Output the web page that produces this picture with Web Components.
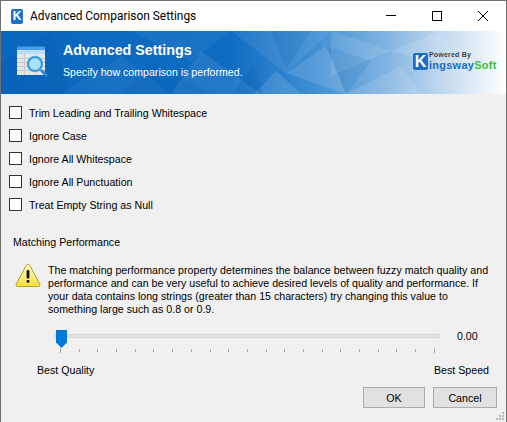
<!DOCTYPE html>
<html>
<head>
<meta charset="utf-8">
<style>
html, body { margin: 0; padding: 0; background: #f0f0f0; }
body { font: 10.65px "Liberation Sans", Arial, sans-serif; color: #000; }
</style>
</head>
<body>
<win-dialog>
	<win-titlebar slot="title">Advanced Comparison Settings</win-titlebar>
	<win-banner slot="banner" heading="Advanced Settings" sub="Specify how comparison is performed."></win-banner>
	<win-check>Trim Leading and Trailing Whitespace</win-check>
	<win-check>Ignore Case</win-check>
	<win-check>Ignore All Whitespace</win-check>
	<win-check>Ignore All Punctuation</win-check>
	<win-check>Treat Empty String as Null</win-check>
	<win-perf slot="perf"></win-perf>
	<win-button slot="buttons" style="width:60px">OK</win-button>
	<win-button slot="buttons" style="width:62px">Cancel</win-button>
</win-dialog>

<script>
function define(name, html) {
	customElements.define(name, class extends HTMLElement {
		constructor() {
			super();
			this.attachShadow({ mode: "open" }).innerHTML = typeof html === "function" ? html(this) : html;
		}
	});
}

define("win-dialog", `
	<style>
		:host { display: flex; flex-direction: column; width: 507px; height: 422px; box-sizing: border-box;
			border: 1px solid #707070; border-bottom: 0; background: #f0f0f0; position: relative; }
		.checks { display: flex; flex-direction: column; gap: 10px; padding: 12px 0 0 8px; }
		.buttons { display: flex; justify-content: flex-end; gap: 8px; padding: 0 9px 0 0; }
		.grip { position: absolute; right: 1px; bottom: 1px; width: 10px; height: 10px; }
	</style>
	<slot name="title"></slot>
	<slot name="banner"></slot>
	<div class="checks"><slot></slot></div>
	<slot name="perf"></slot>
	<div class="buttons"><slot name="buttons"></slot></div>
	<svg class="grip" viewBox="0 0 10 10" fill="#b8b8b8">
		<rect x="7" y="1" width="2" height="2"/>
		<rect x="4" y="4" width="2" height="2"/><rect x="7" y="4" width="2" height="2"/>
		<rect x="1" y="7" width="2" height="2"/><rect x="4" y="7" width="2" height="2"/><rect x="7" y="7" width="2" height="2"/>
	</svg>
`);

define("win-titlebar", `
	<style>
		:host { display: flex; align-items: center; height: 30px; background: #fff; flex: none; }
		.logo { width: 12px; height: 15px; margin: 0 7px 0 10px; background: #1a73c9; border-radius: 2px; color: #fff;
			font: bold 12px/15px "Liberation Sans", sans-serif; text-align: center; }
		.text { flex: 1; font: 11.9px Roboto, "Noto Sans", sans-serif; color: #000; }
		.btn { width: 46px; height: 30px; display: flex; align-items: center; justify-content: center; }
		svg { width: 10px; height: 10px; stroke: #000; stroke-width: 1; fill: none; shape-rendering: crispEdges; }
		.x { shape-rendering: auto; }
	</style>
	<div class="logo">K</div>
	<div class="text"><slot></slot></div>
	<div class="btn"><svg viewBox="0 0 10 10"><path d="M0 4.5H10"/></svg></div>
	<div class="btn"><svg viewBox="0 0 10 10"><rect x=".5" y=".5" width="9" height="9"/></svg></div>
	<div class="btn"><svg class="x" viewBox="0 0 10 10"><path d="M0 0L10 10M10 0L0 10"/></svg></div>
`);

define("win-banner", el => `
	<style>
		:host { display: flex; align-items: flex-start; height: 63px; flex: none; position: relative; overflow: hidden;
			background: linear-gradient(90deg, #0b67bd 0%, #0e6cc2 45%, #3f8fd3 62%, #7fb3e0 76%, #c5dbf0 88%, #fff 100%); color: #fff; }
		.bg { position: absolute; inset: 0; width: 100%; height: 100%; }
		.icon { position: relative; width: 33px; height: 31px; margin: 15px 0 0 15px; flex: none; }
		.txt { position: relative; margin: 8px 0 0 14px; flex: 1; }
		h1 { margin: 0; font: bold 14.3px/22px "Liberation Sans", sans-serif; }
		p { margin: 4px 0 0; font: 10.6px/14px "Liberation Sans", sans-serif; }
		.brand { position: relative; display: flex; width: 87px; margin: 20px 6px 0 0; }
		.k { width: 15px; height: 17px; margin-top: 2px; background: #1a6fc4; border-radius: 2px; color: #fff; flex: none;
			font: bold 16px/17px "Liberation Sans", sans-serif; text-align: center; }
		.brand-r { display: flex; flex-direction: column; margin-left: 1px; }
		.pw { font: bold 7px/8px "Liberation Sans", sans-serif; letter-spacing: .2px; color: #444; }
		.nm { font: bold 11px/13px "Liberation Sans", sans-serif; letter-spacing: .25px; color: #1a6fc4; white-space: nowrap; }
		.nm b { color: #3cc03c; }
	</style>
	<svg class="bg" viewBox="0 0 505 63" preserveAspectRatio="none">
		<g fill="#fff">
			<polygon points="60,63 120,25 170,63" opacity=".05"/>
			<polygon points="130,0 190,30 230,0" opacity=".05"/>
			<polygon points="170,63 200,20 260,63" opacity=".09"/>
			<polygon points="230,0 285,42 330,0" opacity=".07"/>
			<polygon points="253,63 275,40 300,63" opacity=".12"/>
			<polygon points="285,42 325,15 345,63" opacity=".12"/>
			<polygon points="330,0 330,45 390,20" opacity=".1"/>
			<polygon points="345,63 400,35 420,63" opacity=".12"/>
			<polygon points="390,20 440,0 460,40" opacity=".12"/>
		</g>
		<g fill="#024a96">
			<polygon points="0,30 50,0 70,63 0,63" opacity=".12"/>
			<polygon points="150,30 210,63 120,63" opacity=".1"/>
			<polygon points="270,0 285,38 310,0" opacity=".12"/>
			<polygon points="325,15 370,30 345,63" opacity=".1"/>
			<polygon points="253,35 262,63 230,63" opacity=".15"/>
		</g>
	</svg>
	<svg class="icon" viewBox="0 0 33 31">
		<path d="M1 1.5a1 1 0 0 1 1-1h26a1 1 0 0 1 1 1V4H1z" fill="#4a9ee6"/>
		<rect x="1" y="4" width="28" height="4" fill="#b9dcf8"/>
		<rect x="1" y="8" width="28" height="21" fill="#e6e6e6"/>
		<path d="M1 12.5H29M1 16.5H29M1 20.5H29M1 24.5H29M8.5 8V29M19.5 8V29" stroke="#c9c9c9" fill="none"/>
		<path d="M25 24L31 30" stroke="#2f86d8" stroke-width="3"/>
		<circle cx="19" cy="18" r="7" fill="#a8e2f8" stroke="#2f9be8" stroke-width="2.2"/>
	</svg>
	<div class="txt">
		<h1>${el.getAttribute("heading")}</h1>
		<p>${el.getAttribute("sub")}</p>
	</div>
	<div class="brand">
		<div class="k">K</div>
		<div class="brand-r">
			<div class="pw">Powered By</div>
			<div class="nm">ingsway<b>Soft</b></div>
		</div>
	</div>
`);

define("win-check", `
	<style>
		:host { display: flex; align-items: center; gap: 7px; height: 13px; }
		.box { width: 11px; height: 11px; border: 1px solid #333; background: #fff; flex: none; }
	</style>
	<div class="box"></div>
	<slot></slot>
`);

define("win-perf", `
	<style>
		:host { display: flex; flex-direction: column; height: 176px; flex: none; }
		.head { padding: 24px 0 0 12px; line-height: 14px; }
		.note { display: flex; padding: 15px 0 0 14px; }
		.note svg { width: 26px; height: 24px; flex: none; margin-top: -1px; }
		.note p { margin: 0 0 0 7px; line-height: 13px; white-space: nowrap; }
		.slider { display: flex; align-items: center; height: 24px; padding: 8px 0 0 54px; }
		.track { width: 383px; height: 2px; background: #e3e3e3; border: 1px solid #d8d8d8; position: relative; }
		.thumb { position: absolute; left: 0; top: -5px; width: 11px; height: 18px; background: #0078d7;
			clip-path: polygon(0 0, 100% 0, 100% 70%, 50% 100%, 0 70%); }
		.val { margin-left: 17px; }
		.ticks { display: flex; justify-content: space-between; width: 375px; margin: 0 0 0 59px; height: 5px; }
		.ticks i { width: 1px; height: 3px; margin-top: 1px; background: #aaa; }
		.ticks i:first-child, .ticks i:last-child { height: 5px; margin-top: 0; }
		.ends { display: flex; justify-content: space-between; padding: 10px 17px 0 36px; line-height: 14px; }
	</style>
	<div class="head">Matching Performance</div>
	<div class="note">
		<svg viewBox="0 0 26 24">
			<defs><linearGradient id="w" x1="0" y1="0" x2="0" y2="1"><stop offset="0" stop-color="#fffbd0"/><stop offset="1" stop-color="#f6df3a"/></linearGradient></defs>
			<path d="M13 1.2c.8 0 1.3.4 1.7 1.1l10 18.6c.7 1.3-.1 2.6-1.5 2.6H2.800c-1.400 0-2.200-1.300-1.500-2.600l10-18.600c.4-.7.9-1.100 1.700-1.100z" fill="url(#w)" stroke="#b3a020"/>
			<rect x="11.600" y="7" width="2.800" height="8.500" rx="1.200" fill="#111"/>
			<rect x="11.600" y="17" width="2.800" height="2.800" rx=".8" fill="#111"/>
		</svg>
		<p>The matching performance property determines the balance between fuzzy match quality and<br>performance and can be very useful to achieve desired levels of quality and performance. If<br>your data contains long strings (greater than 15 characters) try changing this value to<br>something large such as 0.8 or 0.9.</p>
	</div>
	<div class="slider">
		<div class="track"><div class="thumb"></div></div>
		<div class="val">0.00</div>
	</div>
	<div class="ticks">${"<i></i>".repeat(21)}</div>
	<div class="ends"><span>Best Quality</span><span>Best Speed</span></div>
`);

define("win-button", `
	<style>
		:host { display: flex; align-items: center; justify-content: center; height: 19px;
			background: #e1e1e1; border: 1px solid #adadad; }
	</style>
	<slot></slot>
`);
</script>
</body>
</html>
